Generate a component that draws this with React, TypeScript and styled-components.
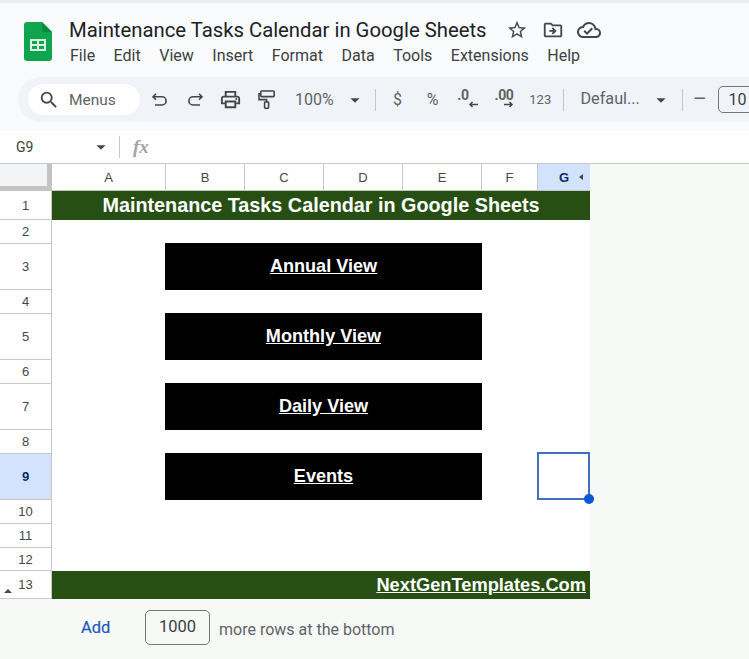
import React from "react";
import styled, { createGlobalStyle } from "styled-components";
import {
  MdArrowDropDown,
  MdOutlineCloudDone,
  MdOutlineDriveFileMove,
  MdOutlineLocalPrintshop,
  MdOutlineStarBorder,
  MdSearch,
} from "react-icons/md";

const Global = createGlobalStyle`
  html, body { margin: 0; padding: 0; background: #f7f9f7; overflow: hidden; }
  * { box-sizing: border-box; }
`;

const Page = styled.div`
  width: 749px;
  height: 659px;
  overflow: hidden;
  display: flex;
  flex-direction: column;
  background: #f7f9f7;
  font-family: Roboto, "Liberation Sans", sans-serif;
`;

const Header = styled.header`
  height: 131px;
  flex: none;
  background: #f9fbfd;
  border-top: 3px solid #ececec;
  display: flex;
  flex-direction: column;
`;

const TitleArea = styled.div`
  height: 74px;
  flex: none;
  display: flex;
  align-items: flex-start;
  padding: 19px 0 0 24px;
`;

const TitleColumn = styled.div`
  margin: -5px 0 0 17px;
  display: flex;
  flex-direction: column;
`;

const TitleRow = styled.div`
  display: flex;
  align-items: center;
  height: 26px;
`;

const DocTitle = styled.div`
  font-size: 20.3px;
  color: #202124;
  white-space: nowrap;
  width: 417px;
`;

const TitleIcons = styled.div`
  display: flex;
  align-items: center;
  margin-left: 20px;
  gap: 13.5px;
  color: #444746;
  line-height: 0;
`;

const MenuBar = styled.nav`
  display: flex;
  margin-top: 3px;
  margin-left: 1px;
  gap: 18.5px;
  font-size: 16px;
  line-height: 20px;
  color: #3c4043;
`;

const ToolbarBar = styled.div`
  margin-left: 18px;
  height: 45px;
  flex: none;
  border-radius: 23px 0 0 23px;
  background: #f0f4f9;
  display: flex;
  align-items: center;
  padding-left: 10px;
  overflow: hidden;
  color: #444746;
`;

const SearchPill = styled.div`
  width: 112px;
  height: 31px;
  flex: none;
  border-radius: 16px;
  background: #ffffff;
  display: flex;
  align-items: center;
  padding-left: 10px;
  margin-right: 2px;
  font-size: 15.5px;
  color: #5f6368;
  & > svg { font-size: 22px; color: #444746; margin-right: 9px; }
`;

const Tool = styled.div<{ $w: number; $size?: number; $pad?: number }>`
  width: ${(p) => p.$w}px;
  flex: none;
  display: flex;
  align-items: center;
  justify-content: ${(p) => (p.$pad !== undefined ? "flex-start" : "center")};
  padding-left: ${(p) => p.$pad ?? 0}px;
  font-size: ${(p) => p.$size ?? 15}px;
  line-height: 1;
  white-space: nowrap;
  color: #5f6368;
  & > svg { color: #444746; }
`;

const Divider = styled.div<{ $l: number; $r: number }>`
  width: 1px;
  height: 22px;
  flex: none;
  margin: 0 ${(p) => p.$r}px 0 ${(p) => p.$l}px;
  background: #c7c7c7;
`;

const DecimalTool = styled.div`
  width: 36px;
  flex: none;
  display: flex;
  flex-direction: column;
  align-items: center;
  font-size: 14px;
  font-weight: 700;
  line-height: 12px;
  color: #5f6368;
  letter-spacing: -0.3px;
  margin-top: -2px;
`;

const DecimalText = styled.span<{ $shift: number }>`
  margin-right: ${(p) => p.$shift}px;
`;

const FontBox = styled.div`
  width: 50px;
  height: 27px;
  flex: none;
  border: 1px solid #747775;
  border-radius: 5px;
  font-size: 16px;
  display: flex;
  align-items: center;
  padding-left: 10px;
  color: #3c4043;
`;

const FormulaBar = styled.div`
  height: 33px;
  flex: none;
  background: #ffffff;
  border-bottom: 1px solid #c7c7c7;
  display: flex;
  align-items: center;
  color: #3c4043;
`;

const NameBox = styled.div`
  width: 92px;
  padding-left: 16px;
  font-size: 14px;
  flex: none;
`;

const NameCaret = styled(MdArrowDropDown)`
  margin-left: -2px;
  font-size: 22px;
  color: #444746;
`;

const FxMark = styled.span`
  margin-left: 13px;
  font-family: "Liberation Serif", serif;
  font-style: italic;
  font-weight: 700;
  font-size: 19px;
  color: #a2a5a8;
`;

const Sheet = styled.div`
  display: grid;
  width: 590px;
  flex: none;
  grid-template-columns: 52px 114px 79px 79px 79px 79px 56px 52px;
  grid-template-rows: 27px 29px 24px 46px 24px 46px 24px 46px 24px 46px 24px 24px 23px 28px;
  background: #ffffff;
  font-family: "Liberation Sans", sans-serif;
`;

const Corner = styled.div`
  background: #f3f4f6;
  border-right: 5px solid #c4c4c4;
  border-bottom: 5px solid #c4c4c4;
`;

const ColHead = styled.div<{ $active?: boolean }>`
  display: flex;
  align-items: center;
  justify-content: center;
  position: relative;
  font-size: 13px;
  font-weight: ${(p) => (p.$active ? 700 : 400)};
  color: ${(p) => (p.$active ? "#0b2a66" : "#444746")};
  background: ${(p) => (p.$active ? "#d3e3fd" : "#ffffff")};
  border-bottom: 1px solid #c7c7c7;
  border-right: ${(p) => (p.$active ? "none" : "1px solid #c7c7c7")};
`;

const ColMarker = styled.span`
  position: absolute;
  right: 7px;
  top: 10px;
  width: 0;
  height: 0;
  border-top: 3.5px solid transparent;
  border-bottom: 3.5px solid transparent;
  border-right: 4px solid #444746;
`;

const RowHead = styled.div<{ $row: number; $active?: boolean }>`
  grid-column: 1;
  grid-row: ${(p) => p.$row + 1};
  display: flex;
  align-items: center;
  justify-content: center;
  position: relative;
  font-size: 13px;
  font-weight: ${(p) => (p.$active ? 700 : 400)};
  color: ${(p) => (p.$active ? "#0b2a66" : "#444746")};
  background: ${(p) => (p.$active ? "#d3e3fd" : "#ffffff")};
  border-bottom: 1px solid #c7c7c7;
  border-right: 1px solid #c7c7c7;
`;

const RowMarker = styled.span`
  position: absolute;
  left: 4px;
  top: 18px;
  width: 0;
  height: 0;
  border-left: 4px solid transparent;
  border-right: 4px solid transparent;
  border-bottom: 4px solid #444746;
`;

const Banner = styled.div<{ $row: number; $end?: boolean }>`
  grid-column: 2 / 9;
  grid-row: ${(p) => p.$row + 1};
  background: #274e13;
  color: #ffffff;
  font-weight: 700;
  font-size: ${(p) => (p.$end ? 18.25 : 19.8)}px;
  text-decoration: ${(p) => (p.$end ? "underline" : "none")};
  display: flex;
  align-items: center;
  justify-content: ${(p) => (p.$end ? "flex-end" : "center")};
  padding-right: ${(p) => (p.$end ? 4 : 0)}px;
`;

const ViewLink = styled.a<{ $row: number }>`
  grid-column: 3 / 7;
  grid-row: ${(p) => p.$row + 1};
  margin: -1px 0 0 -1px;
  background: #000000;
  color: #ffffff;
  font-weight: 700;
  font-size: 18.1px;
  text-decoration: underline;
  display: flex;
  align-items: center;
  justify-content: center;
`;

const SelectedCell = styled.div`
  grid-column: 8;
  grid-row: 10;
  margin: -2px 0 0 -1px;
  border: 2px solid #3f6fbe;
  position: relative;
`;

const FillHandle = styled.span`
  position: absolute;
  right: -6px;
  bottom: -6px;
  width: 10px;
  height: 10px;
  border-radius: 50%;
  background: #0b57d0;
`;

const AddRows = styled.div`
  display: flex;
  align-items: center;
  padding: 11px 0 0 81px;
`;

const AddLink = styled.span`
  width: 64px;
  font-size: 16.5px;
  color: #1f5bbd;
  -webkit-text-stroke: 0.2px #1f5bbd;
`;

const CountBox = styled.div`
  width: 65px;
  height: 35px;
  border: 1px solid #747775;
  border-radius: 5px;
  display: flex;
  align-items: center;
  justify-content: center;
  font-size: 16.5px;
  color: #3c4043;
  padding-bottom: 2px;
`;

const AddNote = styled.span`
  margin: 4px 0 0 9px;
  font-size: 16px;
  color: #5f6368;
`;

const SheetsLogo = () => (
  <svg width="28" height="39" viewBox="0 0 28 39" style={{ flex: "none" }}>
    <path d="M3 0H18L28 10V36a3 3 0 0 1-3 3H3a3 3 0 0 1-3-3V3a3 3 0 0 1 3-3Z" fill="#0fa54f" />
    <path d="M18 0L28 10H20a2 2 0 0 1-2-2Z" fill="#0b8a41" />
    <path d="M6 17h16v12H6Zm2 2v3h5v-3Zm7 0v3h5v-3Zm-7 5v3h5v-3Zm7 0v3h5v-3Z" fill="#d9f2e1" fillRule="evenodd" />
  </svg>
);

const ArrowMark = ({ right }: { right?: boolean }) => (
  <svg width="10" height="7" viewBox="0 0 10 7" style={{ marginLeft: 9 }}>
    <path
      d={right ? "M0 3.5h8M5.5 1l2.5 2.5L5.5 6" : "M10 3.5H2M4.5 1L2 3.5 4.5 6"}
      fill="none"
      stroke="#444746"
      strokeWidth="1.5"
    />
  </svg>
);

const UndoIcon = ({ flip }: { flip?: boolean }) => (
  <svg width="16" height="14" viewBox="0 0 16 14" style={{ transform: flip ? "scaleX(-1)" : undefined }}>
    <path
      d="M4 .8L1 3.8l3 3M1 3.8h9a4 4 0 0 1 0 8.2H3"
      fill="none"
      stroke="#444746"
      strokeWidth="1.6"
    />
  </svg>
);

const RollerIcon = () => (
  <svg width="17" height="19" viewBox="0 0 17 19">
    <g fill="none" stroke="#444746" strokeWidth="1.6">
      <rect x="2.8" y="1" width="13.4" height="5.6" rx="0.8" />
      <path d="M2.8 3.8H1v5.8h7.6V12" />
      <rect x="6.6" y="12" width="4" height="6.2" rx="0.6" />
    </g>
  </svg>
);

const columns = ["A", "B", "C", "D", "E", "F"];
const rows = [1, 2, 3, 4, 5, 6, 7, 8, 9, 10, 11, 12, 13];
const menus = ["File", "Edit", "View", "Insert", "Format", "Data", "Tools", "Extensions", "Help"];
const views: [number, string][] = [
  [3, "Annual View"],
  [5, "Monthly View"],
  [7, "Daily View"],
  [9, "Events"],
];

export default function App() {
  return (
    <Page>
      <Global />
      <Header>
        <TitleArea>
          <SheetsLogo />
          <TitleColumn>
            <TitleRow>
              <DocTitle>Maintenance Tasks Calendar in Google Sheets</DocTitle>
              <TitleIcons>
                <MdOutlineStarBorder size={22} />
                <MdOutlineDriveFileMove size={22} />
                <MdOutlineCloudDone size={24} />
              </TitleIcons>
            </TitleRow>
            <MenuBar>
              {menus.map((m) => (
                <span key={m}>{m}</span>
              ))}
            </MenuBar>
          </TitleColumn>
        </TitleArea>
        <ToolbarBar>
          <SearchPill>
            <MdSearch />
            Menus
          </SearchPill>
          <Tool $w={35.5}><UndoIcon /></Tool>
          <Tool $w={35.5}><UndoIcon flip /></Tool>
          <Tool $w={35.5} $size={23}><MdOutlineLocalPrintshop /></Tool>
          <Tool $w={35.5}><RollerIcon /></Tool>
          <Tool $w={60} $size={16} $pad={11}>100%</Tool>
          <Tool $w={22} $size={22}><MdArrowDropDown /></Tool>
          <Divider $l={9} $r={4} />
          <Tool $w={35} $size={16}>$</Tool>
          <Tool $w={35} $size={16}>%</Tool>
          <DecimalTool>
            <DecimalText $shift={10}>.0</DecimalText>
            <ArrowMark />
          </DecimalTool>
          <DecimalTool>
            <DecimalText $shift={0}>.00</DecimalText>
            <ArrowMark right />
          </DecimalTool>
          <Tool $w={36.5} $size={13}>123</Tool>
          <Divider $l={4} $r={0} />
          <Tool $w={86} $size={16.2} $pad={17}>Defaul...</Tool>
          <Tool $w={22} $size={22}><MdArrowDropDown /></Tool>
          <Divider $l={10} $r={0} />
          <Tool $w={35} $size={21}>–</Tool>
          <FontBox>10</FontBox>
        </ToolbarBar>
      </Header>
      <FormulaBar>
        <NameBox>G9</NameBox>
        <NameCaret />
        <Divider $l={7} $r={0} />
        <FxMark>fx</FxMark>
      </FormulaBar>
      <Sheet>
        <Corner />
        {columns.map((c) => (
          <ColHead key={c}>{c}</ColHead>
        ))}
        <ColHead $active>
          G
          <ColMarker />
        </ColHead>
        {rows.map((r) => (
          <RowHead key={r} $row={r} $active={r === 9}>
            {r === 13 && <RowMarker />}
            {r}
          </RowHead>
        ))}
        <Banner $row={1}>Maintenance Tasks Calendar in Google Sheets</Banner>
        {views.map(([row, label]) => (
          <ViewLink key={label} $row={row}>{label}</ViewLink>
        ))}
        <SelectedCell>
          <FillHandle />
        </SelectedCell>
        <Banner $row={13} $end>NextGenTemplates.Com</Banner>
      </Sheet>
      <AddRows>
        <AddLink>Add</AddLink>
        <CountBox>1000</CountBox>
        <AddNote>more rows at the bottom</AddNote>
      </AddRows>
    </Page>
  );
}
